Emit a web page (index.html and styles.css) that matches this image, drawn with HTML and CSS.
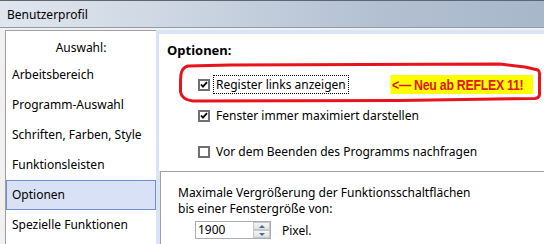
FILE: index.html
```html
<!DOCTYPE html>
<html lang="de">
<head>
  <meta charset="UTF-8">
  <title>Benutzerprofil</title>
  <link rel="stylesheet" href="styles.css">
</head>
<body>
  <div class="window">
    <div class="titlebar">Benutzerprofil</div>
    <div class="frame">
      <div class="nav">
        <div class="nav-head">Auswahl:</div>
        <div class="nav-item">Arbeitsbereich</div>
        <div class="nav-item">Programm-Auswahl</div>
        <div class="nav-item">Schriften, Farben, Style</div>
        <div class="nav-item">Funktionsleisten</div>
        <div class="nav-item selected">Optionen</div>
        <div class="nav-item">Spezielle Funktionen</div>
      </div>

      <div class="pane">
        <div class="options">
          <h2>Optionen:</h2>
          <div class="opt first">
            <span class="cb"><svg viewBox="0 0 8 8"><polyline points="1,3.5 3,5.6 7,1.2"/></svg></span>
            <span class="opt-text focus">Register links anzeigen</span>
            <span class="hint">&lt;— Neu ab REFLEX 11!</span>
          </div>
          <div class="opt second">
            <span class="cb"><svg viewBox="0 0 8 8"><polyline points="1,3.5 3,5.6 7,1.2"/></svg></span>
            <span class="opt-text">Fenster immer maximiert darstellen</span>
          </div>
          <div class="opt third">
            <span class="cb"></span>
            <span class="opt-text">Vor dem Beenden des Programms nachfragen</span>
          </div>
          <!-- rote Markierung (Annotation) -->
          <svg class="ring" viewBox="0 0 385 137">
            <path d="M21.5 49 C21.5 40 22 34 29 32 L71 31 L341 30 L366 33 L379 36 Q381 38 380.5 41 L380.5 61 Q380 64 376 64.5 L241 66.5 L34 67 Q23 66 21.5 58 Z"/>
          </svg>
        </div>

        <div class="sizes">
          <p>Maximale Vergrößerung der Funktionsschaltflächen<br>bis einer Fenstergröße von:</p>
          <div class="spin-row">
            <div class="spin">
              <span class="spin-value">1900</span>
              <div class="spin-btns">
                <span class="spin-btn up"></span>
                <span class="spin-btn down"></span>
              </div>
            </div>
            <span class="unit">Pixel.</span>
          </div>
        </div>
      </div>
    </div>
  </div>
</body>
</html>
```

FILE: styles.css
```css
body {
  margin: 0;
  font-family: "Noto Sans", "Open Sans", sans-serif;
  font-size: 12px;
  color: #000;
}

.window {
  width: 544px;
  height: 244px;
  overflow: hidden;
  background: #f0f0f0;
  display: flex;
  flex-direction: column;
}

.titlebar {
  height: 26px;
  line-height: 28px;
  padding-left: 7px;
  border-top: 1px solid #5d6673;
  border-bottom: 1px solid #8e9bad;
  background: linear-gradient(to right, #e0e6ee 0%, #cbd5e1 35%, #b3c0d2 70%, #a9b7cb 100%);
}

.frame {
  flex: 1;
  display: flex;
  padding-top: 2px;
  min-height: 0;
}

/* linke Liste */
.nav {
  width: 150px;
  margin-left: 5px;
  border-top: 1px solid #a0a0a0;
  border-left: 1px solid #a0a0a0;
  background: #fff;
}
.nav-head {
  height: 25px;
  line-height: 25px;
  padding-top: 4px;
  text-align: center;
}
.nav-item {
  height: 28px;
  line-height: 28px;
  padding-left: 5px;
  border: 1px solid transparent;
  white-space: nowrap;
}
.nav-item.selected {
  background: #d9e1f6;
  border-color: #6f8fd0;
}

/* rechte Seite */
.pane {
  flex: 1;
  background: #d9e4f6;
  padding: 4px 0 0 3px;
  display: flex;
  flex-direction: column;
}
.options {
  position: relative;
  height: 137px;
  background: #fff;
}
.options h2 {
  margin: 0;
  height: 32px;
  line-height: 32px;
  padding-left: 8px;
  font-size: 13px;
  font-weight: bold;
}
.opt {
  display: flex;
  align-items: center;
  height: 19px;
  padding-left: 39px;
  padding-right: 11px;
}
.opt.first { margin-top: 9px; }
.opt.second { margin-top: 12px; }
.opt.third { margin-top: 17px; }

.cb {
  width: 12px;
  height: 12px;
  box-sizing: border-box;
  border: 2px solid #707070;
  background: #fff;
  display: flex;
}
.cb svg {
  width: 8px;
  height: 8px;
  fill: none;
  stroke: #000;
  stroke-width: 1.8;
}
.opt-text {
  margin-left: 3px;
  padding: 0 2px;
  line-height: 17px;
  border: 1px solid transparent;
  white-space: nowrap;
}
.opt-text.focus {
  border: 1px dotted #000;
}
.hint {
  margin-left: auto;
  width: 174px;
  height: 19px;
  line-height: 19px;
  padding: 0 2px;
  box-sizing: border-box;
  background: #ffff00;
  color: #e3151c;
  font-family: "Liberation Sans", sans-serif;
  font-size: 15px;
  font-weight: bold;
  letter-spacing: -0.3px;
  white-space: nowrap;
  transform: scaleX(0.82);
  transform-origin: right center;
}
.ring {
  position: absolute;
  left: 0;
  top: 0;
  width: 385px;
  height: 137px;
  pointer-events: none;
}
.ring path {
  fill: none;
  stroke: #e8141c;
  stroke-width: 3;
  stroke-linejoin: round;
}

/* Fenstergröße */
.sizes {
  flex: 1;
  margin-left: 1px;
  border-top: 1px solid #a0a0a0;
  border-left: 1px solid #a0a0a0;
  background: #fff;
  padding: 13px 0 0 17px;
}
.sizes p {
  margin: 0;
  line-height: 16px;
}
.spin-row {
  display: flex;
  align-items: center;
  margin-top: 4px;
  margin-left: 17px;
}
.spin {
  width: 76px;
  height: 18px;
  box-sizing: border-box;
  border: 1px solid #abadb3;
  display: flex;
  justify-content: space-between;
}
.spin-value {
  padding-left: 2px;
  line-height: 16px;
}
.spin-btns {
  width: 17px;
  display: flex;
  flex-direction: column;
}
.spin-btn {
  flex: 1;
  box-sizing: border-box;
  border: 1px solid #c4c7cc;
  background: linear-gradient(#f6f6f6, #dfe1e5);
  display: flex;
  align-items: center;
  justify-content: center;
}
.spin-btn::after {
  content: "";
  border-left: 3px solid transparent;
  border-right: 3px solid transparent;
}
.spin-btn.up::after { border-bottom: 3px solid #4d6a8f; }
.spin-btn.down::after { border-top: 3px solid #4d6a8f; }
.unit {
  margin-left: 11px;
}
```
